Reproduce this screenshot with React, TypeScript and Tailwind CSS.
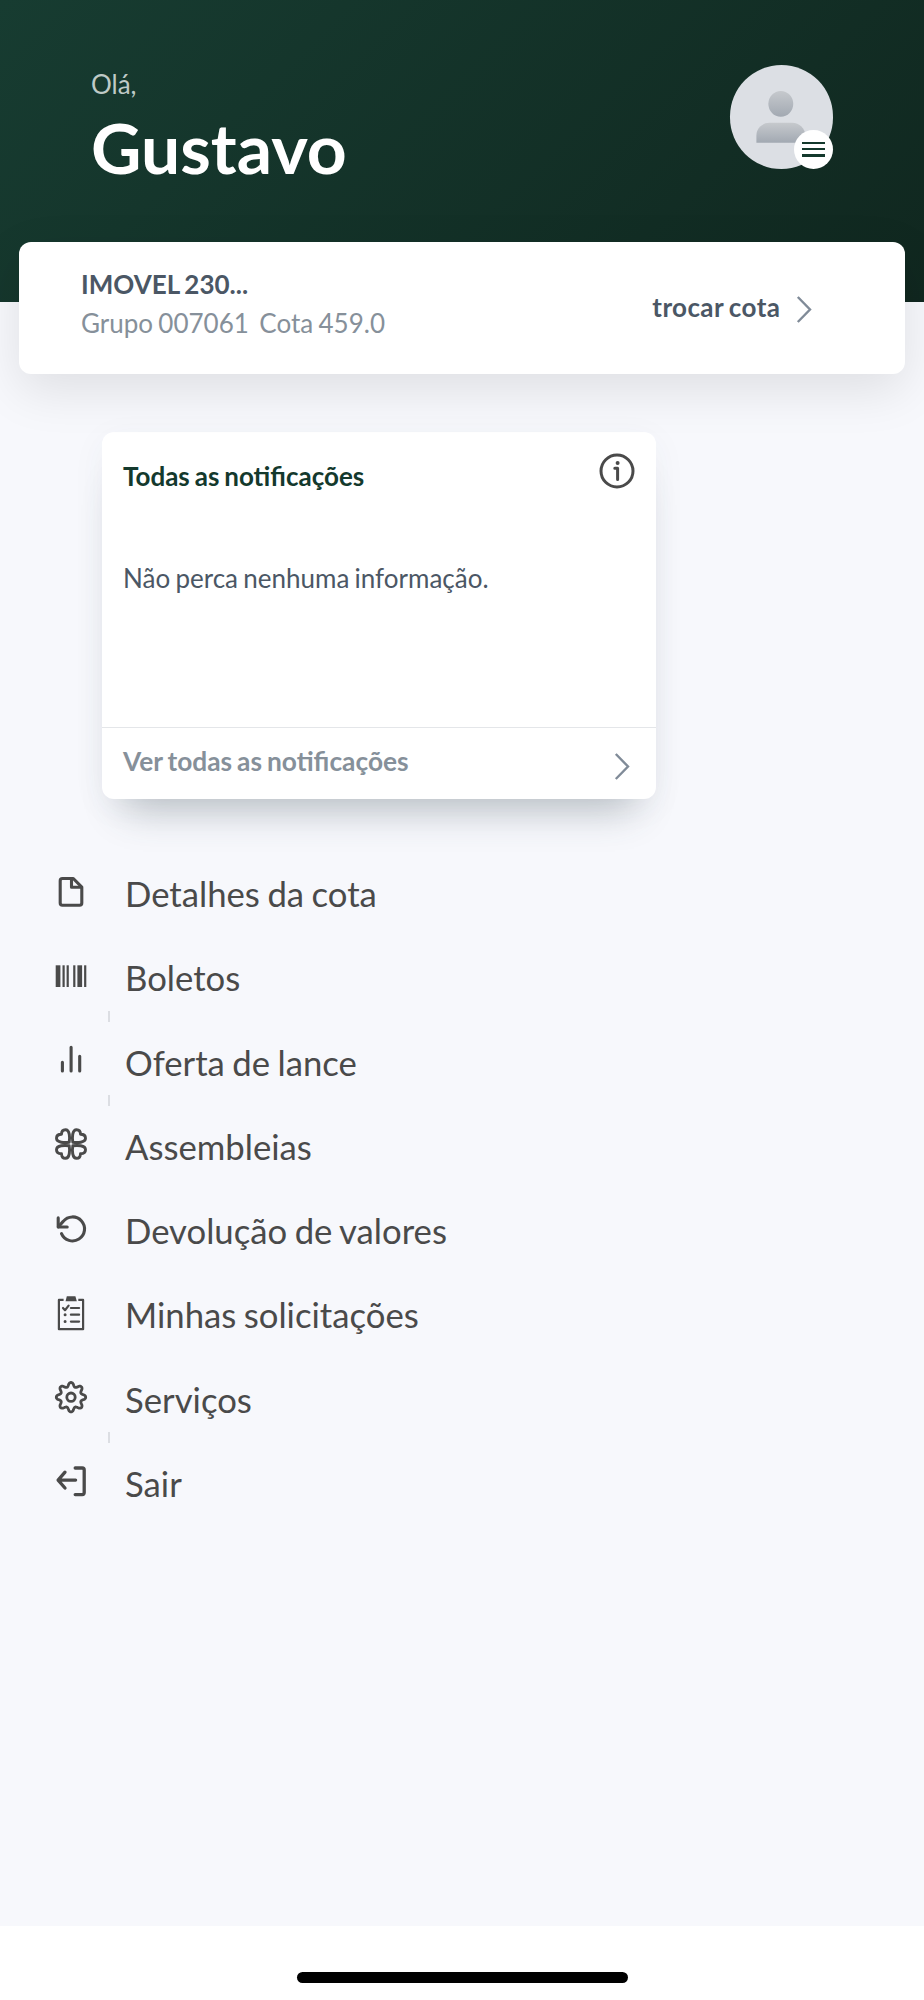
import type { ReactNode } from 'react'

// eight-tooth outline, sampled as a slightly squared wave around the centre
const GEAR = Array.from({ length: 128 }, (_, i) => {
  const a = (i / 128) * Math.PI * 2
  const c = Math.cos(8 * a)
  const r = 12.7 + 2 * Math.sign(c) * Math.abs(c) ** 0.75
  return `${i ? 'L' : 'M'}${(18 + r * Math.cos(a)).toFixed(2)} ${(18.2 + r * Math.sin(a)).toFixed(2)}`
}).join('') + 'Z'

const HEART = 'M16.2 16.2C16.9 12 17 3.7 12.4 3.7C9.7 3.7 8.5 5.5 8.5 8.3C5.5 8.3 3.5 9.6 3.5 12.3C3.5 16.9 12 16.8 16.2 16.2Z'

function Icon({ children, width = 3.1 }: { children: ReactNode; width?: number }) {
  return (
    <svg viewBox="0 0 36 36" className="size-9 shrink-0" fill="none" stroke="#4a4a4a"
      strokeWidth={width} strokeLinecap="round" strokeLinejoin="round">
      {children}
    </svg>
  )
}

const FileIcon = () => (
  <Icon>
    <path d="M20.3 4.5H9.4a2.2 2.2 0 0 0-2.2 2.2V29a2.2 2.2 0 0 0 2.2 2.2h17.2a2.2 2.2 0 0 0 2.2-2.2V13.2Z" />
    <path d="M18.5 4.8v8.5h9.8" />
  </Icon>
)

const BarcodeIcon = () => (
  <Icon>
    <g fill="#4a4a4a" stroke="none">
      <rect x="2.7" y="7.3" width="4.7" height="21.7" />
      <rect x="9.5" y="7.3" width="2.2" height="21.7" />
      <rect x="13.6" y="7.3" width="2.2" height="21.7" />
      <rect x="20.2" y="7.3" width="2.2" height="21.7" />
      <rect x="24.4" y="7.3" width="4.7" height="21.7" />
      <rect x="31.1" y="7.3" width="2.2" height="21.7" />
    </g>
  </Icon>
)

const BarsIcon = () => (
  <Icon>
    <path d="M9.4 20.2v8.7M18.1 5.2v23.7M26.7 14.2v14.7" />
  </Icon>
)

const CloverIcon = () => (
  <Icon width={2.9}>
    <path d={HEART} />
    <path d={HEART} transform="translate(36 0) scale(-1 1)" />
    <path d={HEART} transform="translate(0 36) scale(1 -1)" />
    <path d={HEART} transform="translate(36 36) scale(-1 -1)" />
  </Icon>
)

const UndoIcon = () => (
  <Icon>
    <path d="M5.2 6.9v9.1h9" />
    <path d="M8.5 22.6A12 12 0 1 0 10.2 10.4L5.4 15.8" />
  </Icon>
)

const ClipboardIcon = () => (
  <Icon width={2.2}>
    <path d="M10.6 4.9H5.9v29.3h24.2V4.9h-4.8" strokeLinecap="butt" />
    <path d="M13.8 1.2h8.6l1.4 5H12.6Z" fill="#4a4a4a" stroke="none" />
    <path d="M10 13l2 2.2 3.6-4.6M17.9 13h8.2M17.9 19.7h8.2M17.9 26.6h8.2" />
    <path d="M12.1 19.7h.01M12.1 26.6h.01" strokeWidth="3" />
  </Icon>
)

const GearIcon = () => (
  <Icon width={2.8}>
    <path d={GEAR} />
    <circle cx="18" cy="18.2" r="4.2" />
  </Icon>
)

const ExitIcon = () => (
  <Icon width={3.3}>
    <path d="M22.6 17.1H5.2M12 9.2l-6.9 7.9 6.9 7.9M22.2 5h7a2 2 0 0 1 2 2v22.6a2 2 0 0 1-2 2h-7" />
  </Icon>
)

const Chevron = () => (
  <svg viewBox="0 0 16 28" className="h-7 w-4 shrink-0" fill="none" stroke="#808b98" strokeWidth="2.4">
    <path d="M1.8 1L14 13.5L1.8 26" />
  </svg>
)

const MENU = [
  { label: 'Detalhes da cota', icon: FileIcon },
  { label: 'Boletos', icon: BarcodeIcon, tick: true },
  { label: 'Oferta de lance', icon: BarsIcon, tick: true },
  { label: 'Assembleias', icon: CloverIcon },
  { label: 'Devolução de valores', icon: UndoIcon },
  { label: 'Minhas solicitações', icon: ClipboardIcon },
  { label: 'Serviços', icon: GearIcon, tick: true },
  { label: 'Sair', icon: ExitIcon },
]

function Avatar() {
  return (
    <div className="relative mt-[65px] size-[103.6px] rounded-full bg-[#dcdfe4]">
      <svg viewBox="0 0 104 104" className="size-full">
        <defs>
          <linearGradient id="person" x1="0" y1="0" x2="0" y2="1">
            <stop offset="0" stopColor="#c6c9cd" />
            <stop offset="1" stopColor="#a2a9b2" />
          </linearGradient>
        </defs>
        <ellipse cx="51" cy="39" rx="12.5" ry="13" fill="url(#person)" />
        <path d="M26.5 78V71a13 13 0 0 1 13-13h23a13 13 0 0 1 13 13v7Z" fill="url(#person)" />
      </svg>
      <div className="absolute right-0 bottom-0 flex size-[39px] flex-col items-center justify-center gap-1 rounded-full bg-white">
        <span className="h-[2.4px] w-[23px] bg-[#14392d]" />
        <span className="h-[2.4px] w-[23px] bg-[#14392d]" />
        <span className="h-[2.4px] w-[23px] bg-[#14392d]" />
      </div>
    </div>
  )
}

export default function App() {
  return (
    <div className="flex h-[2000px] w-[924px] flex-col overflow-hidden bg-[#f7f8fc] font-['Lato',sans-serif] text-[26px] leading-8 [word-spacing:-0.053em]">
      <header className="flex h-[302px] shrink-0 justify-between bg-[linear-gradient(135deg,#173c31,#10271f)] pr-[90.7px] pl-[91px]">
        <div className="pt-[67.5px]">
          <div className="text-[#bfcac6]">Olá,</div>
          <div className="mt-[5px] text-[69.6px] leading-[84px] font-bold text-white">Gustavo</div>
        </div>
        <Avatar />
      </header>

      {/* Quota card, overlapping the header */}
      <section className="relative mx-[19px] -mt-[60px] flex h-[132px] shrink-0 justify-between rounded-xl bg-white pr-[92.7px] pl-[62px] shadow-[0_16px_50px_rgba(0,0,0,0.1)]">
        <div className="pt-[26px]">
          <div className="font-bold text-[#4b5765]">IMOVEL 230...</div>
          <div className="mt-[7px] whitespace-pre text-[#86909a]">Grupo 007061  Cota 459.0</div>
        </div>
        <div className="flex pt-[49px]">
          <span className="font-bold tracking-[0.4px] text-[#4b5765]">trocar cota</span>
          <div className="mt-[5px] ml-4"><Chevron /></div>
        </div>
      </section>

      {/* Notifications */}
      <section className="mt-[58px] ml-[102px] flex h-[367px] w-[553.6px] shrink-0 flex-col rounded-xl bg-white shadow-[0_32px_38px_-22px_rgba(60,75,85,0.32),0_8px_34px_rgba(60,75,90,0.05)]">
        <div className="flex justify-between pr-[21px] pl-[21px]">
          <h2 className="mt-7 font-bold text-[#14392d]">Todas as notificações</h2>
          <svg viewBox="0 0 36 36" className="mt-[21px] size-9" fill="none" stroke="#4a4a4a" strokeWidth="3">
            <circle cx="18" cy="18" r="16" />
            <path d="M15.8 15.3h2.8v11.2" strokeLinecap="round" strokeLinejoin="round" />
            <circle cx="18.6" cy="9.9" r="2" fill="#4a4a4a" stroke="none" />
          </svg>
        </div>
        <p className="mt-[70px] pl-[21px] text-[#4b5765]">Não perca nenhuma informação.</p>
        <div className="mt-auto flex h-[72px] justify-between border-t border-[#e4e6e9] pr-[26px] pl-[21px]">
          <span className="mt-[17px] text-[26.3px] font-bold text-[#86909a]">Ver todas as notificações</span>
          <div className="mt-[25px]"><Chevron /></div>
        </div>
      </section>

      <nav className="mt-[50.5px] pl-[53px]">
        {MENU.map(({ label, icon: I, tick }) => (
          <div key={label} className="flex h-[84.24px] items-center">
            <I />
            <span className={`-mb-1 ml-[19px] h-[11px] w-0.5 self-end ${tick ? 'bg-[#dcdee3]' : ''}`} />
            <span className="mt-[5px] ml-[15px] text-[34.7px] leading-10 text-[#4a4a4a]">{label}</span>
          </div>
        ))}
      </nav>

      <footer className="mt-auto flex h-[74px] shrink-0 justify-center bg-white pt-[46px]">
        <div className="h-[11px] w-[331px] rounded-full bg-black" />
      </footer>
    </div>
  )
}
